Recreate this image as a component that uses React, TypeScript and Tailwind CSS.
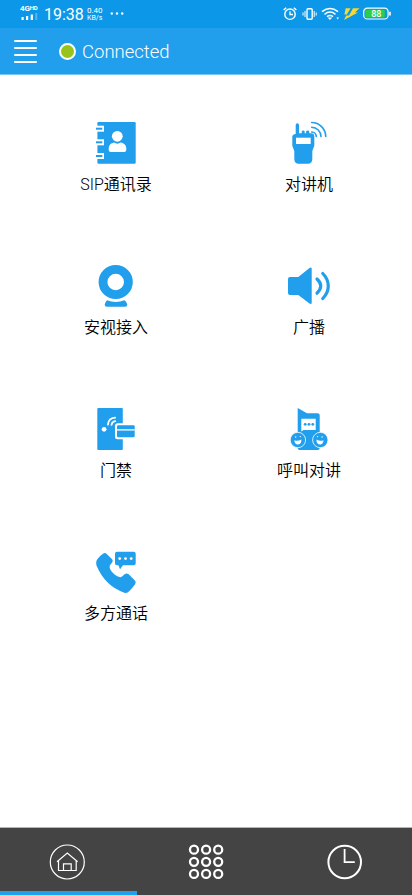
import type { ReactNode } from "react";

const BLUE = "#219eec";

interface Feature {
  label: string;
  icon: ReactNode;
}

function StatusBar() {
  return (
    <div className="flex h-7 items-center justify-between bg-[#0c97e8] px-5 text-white">
      <div className="flex h-full items-center">
        <div className="flex w-[19px] flex-col pb-1">
          <span className="flex text-[8px] leading-[7px] font-bold tracking-tight">
            4G<span className="text-[6px] leading-[5px]">HD</span>
          </span>
          <svg width="18" height="7" viewBox="0 0 18 7" className="mt-px" fill="#fff">
            <rect x="1.5" y="4" width="2.2" height="3" />
            <rect x="6" y="3" width="2.2" height="4" />
            <rect x="10.7" y="1.5" width="2.2" height="5.5" />
            <rect x="15.3" y="0" width="2" height="7" opacity="0.3" />
          </svg>
        </div>
        <span className="ml-[5px] w-[43px] pt-px text-[16px] leading-none">19:38</span>
        <span className="flex w-[22px] flex-col text-[8px] leading-[8px]">
          <span>0.40</span>
          <span className="text-[7px] leading-[7px]">KB/s</span>
        </span>
        <svg width="14" height="4" viewBox="0 0 14 4" className="ml-px" fill="#fff">
          <circle cx="1.8" cy="1.5" r="1.2" />
          <circle cx="7" cy="1.5" r="1.2" />
          <circle cx="12.2" cy="1.5" r="1.2" />
        </svg>
      </div>
      <svg width="110" height="18" viewBox="282 3.5 110 18" fill="none" stroke="#fff">
        <circle cx="290" cy="12.7" r="5.2" strokeWidth="1.4" />
        <path d="M290 9.7v3.3h3M283.6 8.6l2.6-2.4M296.4 8.6l-2.6-2.4" strokeWidth="1.3" />
        <rect x="307" y="7.2" width="5.2" height="10.6" rx="1" strokeWidth="1.4" />
        <path d="M305 9.5v6M303 11v3M314.2 9.5v6M316.2 11v3" strokeWidth="1" />
        <path d="M322 10.2q8-6.4 16 0M324.5 12.8q5.5-4.4 11 0M327 15.2q3-2.2 6 0" strokeWidth="1.5" />
        <path d="M327.6 16.1h4.6l-2.3 2.3z" fill="#fff" stroke="none" />
        <path d="M336.4 15.9h2.6l-1.3 2z" fill="#fff" stroke="none" />
        <g fill="#f4d835" stroke="none">
          <path d="M345.7 6.800h4.800l-3.600 6.200h-2.500z" />
          <path d="M353 6.800h6.500l-4.500 4.200h3L344 18.500l2.200-4.500h2.800z" />
        </g>
        <rect x="363.7" y="6.7" width="24.400" height="10.800" rx="3.600" strokeWidth="1.200" />
        <rect x="365.400" y="8.200" width="19.400" height="7.800" rx="1.600" fill="#27cf4a" stroke="none" />
        <path d="M390 10.200v3.800" strokeWidth="1.600" />
        <text x="376.300" y="15.400" textAnchor="middle" fill="#fff" stroke="none" className="text-[9px] font-medium">
          88
        </text>
      </svg>
    </div>
  );
}

function Header() {
  return (
    <header className="flex h-[47px] items-center border-b border-[#7cc6f5] bg-[#219eec] pl-[14px] text-white">
      <button type="button" aria-label="Menu" className="flex w-[23px] flex-col gap-[5px]">
        <span className="h-0.5 rounded-full bg-white" />
        <span className="h-0.5 rounded-full bg-white" />
        <span className="h-0.5 rounded-full bg-white" />
        <span className="h-0.5 rounded-full bg-white" />
      </button>
      <span className="ml-[22px] size-[17px] rounded-full border-[2.5px] border-white bg-[#98c21d]" />
      <span className="ml-[6px] pt-0.5 text-[18.5px] leading-6 font-light">Connected</span>
    </header>
  );
}

const features: Feature[] = [
  {
    label: "SIP通讯录",
    icon: (
      <>
        <rect x="5.4" y="3" width="38.3" height="41.7" rx="1.2" />
        <g fill="#fff">
          <rect x="4" y="6.7" width="8" height="6" />
          <rect x="4" y="20.3" width="8" height="6" />
          <rect x="4" y="34" width="8" height="6" />
        </g>
        <rect x="4" y="8.7" width="6.3" height="2" />
        <rect x="4" y="22.3" width="6.3" height="2" />
        <rect x="4" y="36" width="6.3" height="2" />
        <g fill="#fff">
          <circle cx="25.3" cy="17.3" r="5.4" />
          <path d="M16.7 31v-1.5c0-3.5 2-5.5 5.3-6 2 1.5 4.6 1.5 6.6 0 3.4.5 5.7 2.5 5.7 6V31q0 2-2.2 2H18.9q-2.2 0-2.2-2z" />
        </g>
      </>
    ),
  },
  {
    label: "对讲机",
    icon: (
      <>
        <path d="M10.7 15V6q0-1.7 1.6-1.7T14 6v8.3h2.7v-1.5q0-1.2 1.5-1.2t1.5 1.2v1.5h1.4v-1.5q0-1.2 1.6-1.2t1.6 1.2v1.5h1.7q3.3 0 3.300 3.400v9l-1.500 4-.5 1.500V40q0 4.700-4.500 4.700h-9Q9.300 44.700 9.300 40v-7.800l-.5-1.500-1.500-4v-9q0-2.200 3.400-2.700z" />
        <rect x="11" y="18.700" width="14.700" height="6.300" fill="#fff" />
        <path
          d="M26.700 3.500A14 14 0 0 1 40.700 17.500M26.700 8.300A9.400 9.400 0 0 1 36 17.600M26.700 13A4.700 4.700 0 0 1 31.300 17.500"
          fill="none"
          stroke={BLUE}
          strokeWidth="1.600"
          strokeLinecap="round"
        />
      </>
    ),
  },
  {
    label: "安视接入",
    icon: (
      <>
        <circle cx="23.700" cy="20" r="12.700" fill="none" stroke={BLUE} strokeWidth="8.800" />
        <path d="M15 38.200q8.700 3.600 17.600 0 2.700 2.300 2.700 4.300 0 2.300-2.300 2.300H15q-2.300 0-2.300-2.300 0-2 2.300-4.300z" />
      </>
    ),
  },
  {
    label: "广播",
    icon: (
      <>
        <path d="M5 15h8.300L24.500 6q2.200-1.300 2.200.8v34q0 2.100-2.200.8L13.300 33H5q-2 0-2-2V17q0-2 2-2z" />
        <path
          d="M32 17q7.500 7 0 14.200M37.800 11.500c7.300 7.500 7.300 17.500 0 25"
          fill="none"
          stroke={BLUE}
          strokeWidth="3.200"
          strokeLinecap="round"
        />
      </>
    ),
  },
  {
    label: "门禁",
    icon: (
      <>
        <rect x="5.300" y="3" width="25.500" height="42" rx="1" />
        <circle cx="12.100" cy="24.300" r="2.400" fill="#fff" />
        <path
          d="M15.900 19.600q.4-6.300 7.300-7M19.500 19.800q.4-3.200 3.700-3.700"
          fill="none"
          stroke="#fff"
          strokeWidth="1.800"
          strokeLinecap="round"
        />
        <rect x="23" y="18.200" width="21.500" height="16" rx="2.500" fill="#fff" />
        <rect x="25" y="20.200" width="17.700" height="12" rx="1.200" />
        <path d="M25 24.900h17.700" stroke="#fff" strokeWidth="1.300" />
      </>
    ),
  },
  {
    label: "呼叫对讲",
    icon: (
      <>
        <path d="M12.700 3 22 8.300h10.700q2 0 2 2V43q0 2-2 2H15.500q-2.800 0-2.800-2z" />
        <path d="M16.300 13.700h14.400V25H18.500l-2.200 1.500z" fill="#fff" />
        <circle cx="20.200" cy="19.300" r="1.400" />
        <circle cx="24" cy="19.300" r="1.400" />
        <circle cx="27.800" cy="19.300" r="1.400" />
        <g stroke="#fff" strokeWidth="0.8">
          <circle cx="12.900" cy="35" r="7.700" />
          <circle cx="35.300" cy="35" r="7.700" />
        </g>
        <g fill="#fff">
          <path d="M9.200 35.300q3.500 1.300 7.200-.8 0 5-3.800 5-2.700 0-3.400-4.200z" />
          <path d="M31.400 34.500q3.700 2.100 7.200.8-.7 4.200-3.400 4.200-3.800 0-3.800-5z" />
          <circle cx="10.700" cy="32" r=".7" />
          <circle cx="15.300" cy="31.600" r=".7" />
          <circle cx="32.500" cy="31.600" r=".7" />
          <circle cx="37.100" cy="32" r=".7" />
        </g>
      </>
    ),
  },
  {
    label: "多方通话",
    icon: (
      <>
        <path d="M14.500 5.800 19.900 11q1.500 1.500.4 3.300l-2.500 3.200q-1 3.200 3.200 7.600t8.300 4l3.700-3.200q2-1.200 3.700.4l6.200 6.300q1.600 1.600.2 3.600-3 4.200-5.700 6.800-2.200 2.500-5 1.700Q13 38 4.500 17.500 3.500 13.500 5.500 11q2-3 5.500-5.300 2-1.300 3.500.1z" />
        <path d="M25 3.700h16.700q2 0 2 2v9.500q0 2-2 2H31L28 21.300l-1.500-4.100H25q-2 0-2-2V5.700q0-2 2-2z" />
        <g fill="#fff">
          <circle cx="27.700" cy="10.600" r="1.400" />
          <circle cx="33.500" cy="10.600" r="1.400" />
          <circle cx="39.200" cy="10.600" r="1.400" />
        </g>
      </>
    ),
  },
];

function FeatureTile({ label, icon }: Feature) {
  return (
    <button type="button" className="flex h-[143px] flex-col items-center">
      <svg width="48" height="48" viewBox="0 0 48 48" fill={BLUE}>
        {icon}
      </svg>
      <span className="mt-1.5 text-[16px] leading-6 font-[350] text-black">{label}</span>
    </button>
  );
}

const keypad = [0, 1, 2, 3, 4, 5, 6, 7, 8];

function TabBar() {
  return (
    <nav className="flex h-[68px] flex-col border-t border-[#b5b5b5] bg-[#444444]">
      <div className="flex flex-1 items-center justify-between px-[49px] pt-1">
        <svg width="36" height="36" viewBox="0 0 36 36" fill="none" stroke="#fff">
          <circle cx="18.300" cy="18" r="17" strokeWidth="1.200" />
          <path d="M8 17.700 18.300 9l10.300 8.700M9.500 16.500v10h17.700v-10" strokeWidth="1.200" />
          <path d="M14.500 26.500v-6.700h7.700v6.700" strokeWidth="1.200" />
        </svg>
        <svg width="36" height="36" viewBox="0 0 36 36" fill="none" stroke="#fff" strokeWidth="2.300">
          {keypad.map((key) => (
            <circle key={key} cx={6 + (key % 3) * 12.1} cy={5.7 + Math.floor(key / 3) * 12.1} r="4" />
          ))}
        </svg>
        <svg width="36" height="36" viewBox="0 0 36 36" fill="none" stroke="#fff">
          <circle cx="17.700" cy="18" r="16.300" strokeWidth="2" />
          <path d="M17.600 5v13.200h10.200" strokeWidth="1.800" />
        </svg>
      </div>
      <div className="h-1 w-[137px] bg-[#219eec]" />
    </nav>
  );
}

export default function App() {
  return (
    <div className="flex h-[895px] w-[412px] flex-col overflow-hidden bg-white font-['Roboto','Noto_Sans_CJK_SC',sans-serif]">
      <StatusBar />
      <Header />
      <main className="grid flex-1 grid-cols-2 content-start pt-[44px] pr-[6.5px] pl-[19.5px]">
        {features.map((feature) => (
          <FeatureTile key={feature.label} {...feature} />
        ))}
      </main>
      <TabBar />
    </div>
  );
}
